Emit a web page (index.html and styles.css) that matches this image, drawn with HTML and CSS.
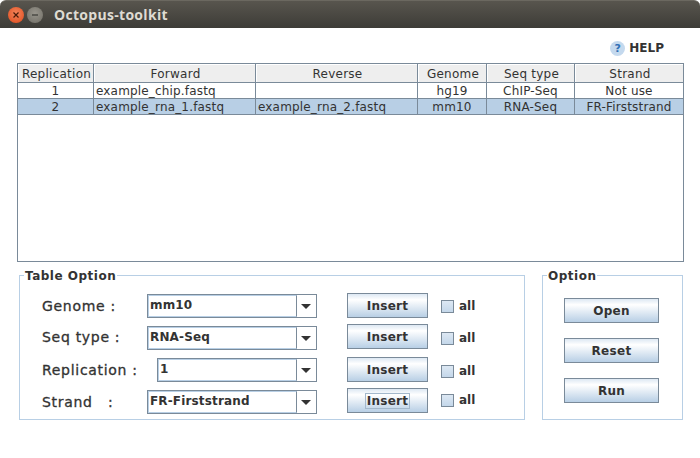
FILE: index.html
```html
<!DOCTYPE html>
<html lang="en">
<head>
    <meta charset="UTF-8">
    <title>Octopus-toolkit</title>
    <link rel="stylesheet" href="styles.css">
</head>
<body>
    <div class="titlebar">
        <span class="win-btn win-close">
            <svg width="8" height="8" viewBox="0 0 8 8"><path d="M1.5 1.5l5 5M6.5 1.5l-5 5" stroke="#4a1a08" stroke-width="1.2"/></svg>
        </span>
        <span class="win-btn win-min">
            <svg width="8" height="8" viewBox="0 0 8 8"><path d="M1 4h6" stroke="#3a3935" stroke-width="1.2"/></svg>
        </span>
        <span class="win-title">Octopus-toolkit</span>
    </div>

    <div class="help-row">
        <span class="help-icon">?</span>
        <span class="help-text">HELP</span>
    </div>

    <div class="table-box">
        <table class="job-table">
            <colgroup>
                <col class="col-rep">
                <col class="col-file">
                <col class="col-file">
                <col class="col-genome">
                <col class="col-seq">
                <col class="col-strand">
            </colgroup>
            <thead>
                <tr>
                    <th>Replication</th>
                    <th>Forward</th>
                    <th>Reverse</th>
                    <th>Genome</th>
                    <th>Seq type</th>
                    <th>Strand</th>
                </tr>
            </thead>
            <tbody>
                <tr>
                    <td class="center">1</td>
                    <td>example_chip.fastq</td>
                    <td></td>
                    <td class="center">hg19</td>
                    <td class="center">ChIP-Seq</td>
                    <td class="center">Not use</td>
                </tr>
                <tr class="selected">
                    <td class="center">2</td>
                    <td>example_rna_1.fastq</td>
                    <td>example_rna_2.fastq</td>
                    <td class="center">mm10</td>
                    <td class="center">RNA-Seq</td>
                    <td class="center">FR-Firststrand</td>
                </tr>
            </tbody>
        </table>
    </div>

    <div class="panels">
        <fieldset class="panel table-option">
            <legend>Table Option</legend>
            <div class="opt-row row-1">
                <span class="opt-label">Genome :</span>
                <div class="combo"><span class="combo-value">mm10</span><span class="combo-arrow"></span></div>
                <button class="btn insert-btn">Insert</button>
                <label class="check"><span class="check-box"></span>all</label>
            </div>
            <div class="opt-row row-2">
                <span class="opt-label">Seq type :</span>
                <div class="combo"><span class="combo-value">RNA-Seq</span><span class="combo-arrow"></span></div>
                <button class="btn insert-btn">Insert</button>
                <label class="check"><span class="check-box"></span>all</label>
            </div>
            <div class="opt-row row-3">
                <span class="opt-label">Replication :</span>
                <div class="combo combo-short"><span class="combo-value">1</span><span class="combo-arrow"></span></div>
                <button class="btn insert-btn">Insert</button>
                <label class="check"><span class="check-box"></span>all</label>
            </div>
            <div class="opt-row row-4">
                <span class="opt-label">Strand   :</span>
                <div class="combo"><span class="combo-value">FR-Firststrand</span><span class="combo-arrow"></span></div>
                <button class="btn insert-btn"><span class="focus-ring">Insert</span></button>
                <label class="check"><span class="check-box"></span>all</label>
            </div>
        </fieldset>

        <fieldset class="panel option">
            <legend>Option</legend>
            <button class="btn side-btn">Open</button>
            <button class="btn side-btn">Reset</button>
            <button class="btn side-btn">Run</button>
        </fieldset>
    </div>
</body>
</html>
```

FILE: styles.css
```css
html, body {
    margin: 0;
    padding: 0;
}
body {
    width: 700px;
    height: 458px;
    overflow: hidden;
    background-color: #fff;
    font-family: "DejaVu Sans", sans-serif;
    color: #333;
}

/* title bar */
.titlebar {
    height: 28px;
    box-sizing: border-box;
    display: flex;
    align-items: center;
    padding-left: 8px;
    background: linear-gradient(#58554e, #3d3c37);
    border-top: 1px solid #6b6860;
    border-radius: 6px 6px 0 0;
}
.win-btn {
    width: 16px;
    height: 16px;
    border-radius: 50%;
    display: flex;
    align-items: center;
    justify-content: center;
    margin-right: 3px;
}
.win-close {
    background: radial-gradient(circle at 50% 40%, #f4845a, #de4a1c);
}
.win-min {
    background: radial-gradient(circle at 50% 40%, #98958c, #6f6d65);
}
.win-title {
    margin-left: 8px;
    font-family: "Open Sans", sans-serif;
    font-weight: 700;
    font-size: 14px;
    letter-spacing: 0.3px;
    color: #dfdbd2;
}

/* help */
.help-row {
    height: 35px;
    display: flex;
    align-items: center;
    justify-content: flex-end;
    padding: 5px 36px 0 0;
    box-sizing: border-box;
}
.help-icon {
    width: 15px;
    height: 15px;
    border-radius: 50%;
    background-color: #c4d9ee;
    color: #2f6fb5;
    font-size: 11px;
    font-weight: bold;
    line-height: 15px;
    text-align: center;
    margin-right: 4px;
}
.help-text {
    font-size: 12px;
    font-weight: bold;
}

/* table */
.table-box {
    margin-left: 17px;
    width: 667px;
    height: 199px;
    box-sizing: border-box;
    border: 1px solid #7a8a99;
}
.job-table {
    width: 665px;
    table-layout: fixed;
    border-collapse: separate;
    border-spacing: 0;
    font-size: 12px;
    color: #333;
}
.col-rep { width: 76px; }
.col-file { width: 162px; }
.col-genome { width: 69px; }
.col-seq { width: 88px; }
.job-table th {
    box-sizing: border-box;
    height: 19px;
    padding: 1px 0 0 2px;
    font-weight: normal;
    letter-spacing: 0.25px;
    background-color: #eee;
    border-right: 1px solid #7a8a99;
    border-bottom: 1px solid #7a8a99;
    box-shadow: inset 1px 1px 0 #fff;
}
.job-table td {
    box-sizing: border-box;
    height: 16px;
    padding: 1px 0 0 2px;
    line-height: 14px;
    letter-spacing: 0.17px;
    border-right: 1px solid #7a8a99;
    border-bottom: 1px solid #7a8a99;
    white-space: nowrap;
    overflow: hidden;
}
.job-table th:last-child,
.job-table td:last-child {
    border-right: none;
}
.job-table td.center {
    text-align: center;
    padding-left: 0;
}
.job-table .selected td {
    background-color: #b8cfe5;
}

/* panels */
.panels {
    display: flex;
    margin: 5px 0 0 19px;
    gap: 17px;
}
.panel {
    margin: 0;
    padding: 0;
    height: 153px;
    box-sizing: border-box;
    border: 1px solid #b8cfe5;
    min-width: 0;
}
.panel legend {
    padding: 2px 1px 0;
    margin-left: 4px;
    font-size: 12px;
    font-weight: bold;
    letter-spacing: 0.5px;
}
.table-option {
    width: 506px;
}
.option {
    width: 141px;
}

/* each row of the Java form sits a little unevenly */
.opt-row {
    display: flex;
    align-items: flex-start;
    height: 25px;
}
.row-1 { margin-top: 10px; --combo-top: 1px; --check-top: 6px; --label-top: 5px; }
.row-2 { margin-top: 6px; --combo-top: 2px; --check-top: 7px; --label-top: 5px; }
.row-3 { margin-top: 8px; --combo-top: 1px; --check-top: 7px; --label-top: 5px; }
.row-4 { margin-top: 6px; --combo-top: 2px; --check-top: 5px; --label-top: 6px; }
.opt-label {
    width: 105px;
    margin: var(--label-top) 0 0 22px;
    font-size: 14px;
    letter-spacing: 0.7px;
    -webkit-text-stroke: 0.3px #333;
    color: #333;
    white-space: pre;
}
.combo {
    width: 170px;
    height: 24px;
    margin-top: var(--combo-top);
    box-sizing: border-box;
    display: flex;
    border: 1px solid #7a8a99;
    background-color: #fff;
}
.combo-short {
    width: 160px;
    margin-left: 10px;
}
.combo-value {
    flex: 1;
    box-sizing: border-box;
    border: 1px solid #b8cfe5;
    border-right: 1px solid #7a8a99;
    padding-left: 1px;
    font-size: 12px;
    font-weight: bold;
    letter-spacing: 0.15px;
    line-height: 19px;
}
.combo-arrow {
    width: 19px;
    position: relative;
}
.combo-arrow::after {
    content: "";
    position: absolute;
    left: 4px;
    top: 9px;
    border-left: 5px solid transparent;
    border-right: 5px solid transparent;
    border-top: 5px solid #333;
}

.btn {
    box-sizing: border-box;
    display: block;
    border: 1px solid #7a8a99;
    padding: 0;
    background: linear-gradient(#dde8f3, #fff 25%, #b8cfe5);
    font-family: inherit;
    font-size: 12px;
    font-weight: bold;
    letter-spacing: 0.3px;
    color: #333;
}
.insert-btn {
    width: 81px;
    height: 25px;
    margin-left: 30px;
}
.focus-ring {
    border: 1px solid #a3b8cc;
    padding: 0 1px;
}
.check {
    display: flex;
    align-items: center;
    margin: var(--check-top) 0 0 13px;
    font-size: 12px;
    font-weight: bold;
}
.check-box {
    width: 13px;
    height: 13px;
    box-sizing: border-box;
    border: 1px solid #7a8a99;
    background: linear-gradient(#dde8f3, #c4d7ea);
    margin-right: 5px;
}
.side-btn {
    width: 95px;
    height: 25px;
    margin: 15px 0 0 21px;
}
.side-btn:first-of-type {
    margin-top: 15px;
}
```
